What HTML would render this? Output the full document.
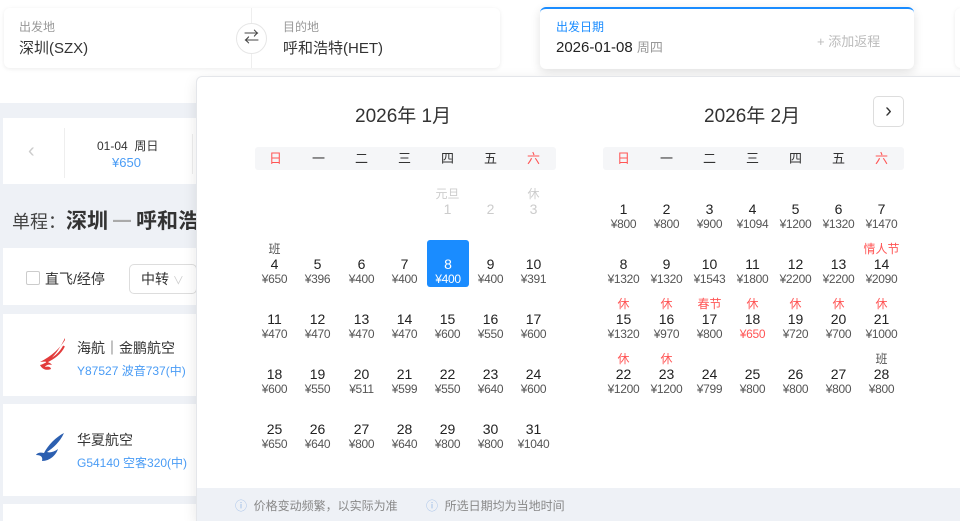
<!DOCTYPE html>
<html><head><meta charset="utf-8"><style>
*{margin:0;padding:0;box-sizing:border-box}
html,body{width:960px;height:521px;overflow:hidden}
body{background:#fff;font-family:"Liberation Sans","Noto Sans CJK SC",sans-serif;position:relative;color:#333}
.a{position:absolute}
.card{position:absolute;background:#fff;border-radius:6px;box-shadow:0 1px 4px rgba(0,0,0,.08)}
.lbl{font-size:12px;color:#999}
.c{position:absolute;width:43px;text-align:center}
.c .l{height:14px;font-size:12px;line-height:14px;color:#f55}
.c .l.g{color:#555}
.c .n{height:16px;font-size:14px;line-height:16px;color:#222}
.c .p{height:14px;font-size:12px;line-height:14px;color:#555;letter-spacing:-.3px}
.c.dis .n,.c.dis .l{color:#ccc}
.c.sel{background:#1a8cff;border-radius:3px}
.c.sel .n,.c.sel .p{color:#fff}
.wk{position:absolute;height:23px;background:#f5f6f8;border-radius:3px;font-size:13px;line-height:23px}
.wk span{position:absolute;width:43px;text-align:center;top:0}
</style></head><body>
<!-- top bar -->
<div class="card" style="left:4px;top:8px;width:496px;height:60px"></div>
<div class="a" style="left:251px;top:8px;width:1px;height:60px;background:#eee"></div>
<div class="a lbl" style="left:19px;top:18px">出发地</div>
<div class="a" style="left:19px;top:37px;font-size:15px">深圳(SZX)</div>
<div class="a" style="left:236px;top:23px;width:31px;height:31px;border-radius:50%;background:#fff;border:1px solid #e6e6e6;text-align:center;line-height:28px;font-size:15px;color:#444">⇄</div>
<div class="a lbl" style="left:283px;top:18px">目的地</div>
<div class="a" style="left:283px;top:37px;font-size:15px">呼和浩特(HET)</div>
<div class="card" style="left:540px;top:7px;width:374px;height:62px;border-top:2px solid #1a8cff;box-shadow:0 3px 10px rgba(0,0,0,.12)"></div>
<div class="a" style="left:556px;top:18px;font-size:12px;color:#1a8cff">出发日期</div>
<div class="a" style="left:556px;top:37px;font-size:15px;color:#222">2026-01-08 <span style="font-size:13px;color:#999">周四</span></div>
<div class="a" style="left:817px;top:31px;font-size:13px;color:#bbb">+ 添加返程</div>
<div class="card" style="left:955px;top:8px;width:20px;height:60px"></div>
<!-- left background -->
<div class="a" style="left:0;top:103px;width:960px;height:418px;background:#eef1f6"></div>
<div class="a" style="left:3px;top:118px;width:200px;height:66px;background:#fff"></div>
<div class="a" style="left:28px;top:140px;font-size:20px;color:#ccc">‹</div>
<div class="a" style="left:64px;top:128px;width:1px;height:50px;background:#eee"></div>
<div class="a" style="left:97px;top:137px;font-size:12px">01-04&nbsp; 周日</div>
<div class="a" style="left:112px;top:155px;font-size:13px;color:#4a9cf5">¥650</div>
<div class="a" style="left:192px;top:134px;width:1px;height:40px;background:#eee"></div>
<div class="a" style="left:12px;top:205px;font-size:18px;color:#444">单程：<b style="font-size:21px;color:#333">深圳</b><span style="color:#aaa"> ━ </span><b style="font-size:21px;color:#333">呼和浩</b></div>
<div class="a" style="left:3px;top:248px;width:200px;height:57px;background:#fff"></div>
<div class="a" style="left:26px;top:271px;width:14px;height:14px;border:1px solid #ccc;border-radius:2px;background:#fff"></div>
<div class="a" style="left:45px;top:269px;font-size:14px">直飞/经停</div>
<div class="a" style="left:129px;top:264px;width:68px;height:30px;border:1px solid #ddd;border-radius:5px;font-size:14px;line-height:28px;padding-left:11px">中转 <span style="color:#ccc;font-size:11px">∨</span></div>
<div class="a" style="left:3px;top:314px;width:200px;height:82px;background:#fff"></div>
<div class="a" style="left:3px;top:404px;width:200px;height:92px;background:#fff"></div>
<div class="a" style="left:3px;top:504px;width:200px;height:17px;background:#fff"></div>
<svg class="a" style="left:34px;top:338px" width="34" height="36" viewBox="0 0 34 36"><path d="M31 2C26 10 18 18 6 24c6-1 10 0 12 3-3-1-6 0-7 2 3-1 6 0 6 2-5 2-9 0-11-4 8-2 16-9 25-27z" fill="#e23b3b"/><path d="M30 8C26 16 20 20 12 24" stroke="#e23b3b" stroke-width="2" fill="none"/></svg>
<div class="a" style="left:77px;top:338px;font-size:14px">海航｜金鹏航空</div>
<div class="a" style="left:77px;top:362px;font-size:12px;color:#4a9cf5">Y87527 波音737(中)</div>
<svg class="a" style="left:34px;top:431px" width="32" height="36" viewBox="0 0 32 36"><path d="M30 2C22 6 14 14 10 22c-4-1-7 0-8 2 5 0 7 2 6 6 8 0 14-6 16-12-4 3-8 4-11 3 6-4 13-10 17-19z" fill="#2c5fb0"/></svg>
<div class="a" style="left:77px;top:430px;font-size:14px">华夏航空</div>
<div class="a" style="left:77px;top:454px;font-size:12px;color:#4a9cf5">G54140 空客320(中)</div>
<!-- popup -->
<div class="a" style="left:196px;top:76px;width:780px;height:445px;background:#fff;border:1px solid #e4e6ea;border-bottom:none;border-radius:6px 6px 0 0;box-shadow:0 4px 14px rgba(0,0,0,.1);overflow:hidden">
<div class="a" style="left:0;top:411px;width:780px;height:40px;background:#eef1f6"></div>
<div class="a" style="left:38px;top:420px;font-size:12px;color:#888"><span style="color:#9bbbe6">ⓘ</span>&nbsp; 价格变动频繁，以实际为准</div>
<div class="a" style="left:229px;top:420px;font-size:12px;color:#888"><span style="color:#9bbbe6">ⓘ</span>&nbsp; 所选日期均为当地时间</div>
</div>
<div class="a" style="left:355px;top:101px;font-size:19px;color:#333">2026年 1月</div>
<div class="a" style="left:704px;top:101px;font-size:19px;color:#333">2026年 2月</div>
<div class="a" style="left:873px;top:96px;width:31px;height:31px;border:1px solid #ddd;border-radius:5px;text-align:center;line-height:28px;font-size:20px;color:#333">›</div>
<div class="wk" style="left:255px;top:147px;width:301px"><span style="left:-1px;color:#f55">日</span><span style="left:42px">一</span><span style="left:85px">二</span><span style="left:128px">三</span><span style="left:171px">四</span><span style="left:214px">五</span><span style="left:257px;color:#f55">六</span></div>
<div class="wk" style="left:603px;top:147px;width:301px"><span style="left:-1px;color:#f55">日</span><span style="left:42px">一</span><span style="left:85px">二</span><span style="left:128px">三</span><span style="left:171px">四</span><span style="left:214px">五</span><span style="left:257px;color:#f55">六</span></div>
<!-- Jan -->
<div class="c dis" style="left:426px;top:187px"><div class="l" style="color:#ccc">元旦</div><div class="n">1</div></div>
<div class="c dis" style="left:469px;top:187px"><div class="l"></div><div class="n">2</div></div>
<div class="c dis" style="left:512px;top:187px"><div class="l" style="color:#ccc">休</div><div class="n">3</div></div>
<div class="c" style="left:253px;top:242px"><div class="l g">班</div><div class="n">4</div><div class="p">¥650</div></div>
<div class="c" style="left:296px;top:242px"><div class="l"></div><div class="n">5</div><div class="p">¥396</div></div>
<div class="c" style="left:340px;top:242px"><div class="l"></div><div class="n">6</div><div class="p">¥400</div></div>
<div class="c" style="left:383px;top:242px"><div class="l"></div><div class="n">7</div><div class="p">¥400</div></div>
<div class="c sel" style="left:427px;top:240px;height:47px;width:42px;padding-top:2px"><div class="l"></div><div class="n">8</div><div class="p">¥400</div></div>
<div class="c" style="left:469px;top:242px"><div class="l"></div><div class="n">9</div><div class="p">¥400</div></div>
<div class="c" style="left:512px;top:242px"><div class="l"></div><div class="n">10</div><div class="p">¥391</div></div>
<div class="c" style="left:253px;top:297px"><div class="l"></div><div class="n">11</div><div class="p">¥470</div></div>
<div class="c" style="left:296px;top:297px"><div class="l"></div><div class="n">12</div><div class="p">¥470</div></div>
<div class="c" style="left:340px;top:297px"><div class="l"></div><div class="n">13</div><div class="p">¥470</div></div>
<div class="c" style="left:383px;top:297px"><div class="l"></div><div class="n">14</div><div class="p">¥470</div></div>
<div class="c" style="left:426px;top:297px"><div class="l"></div><div class="n">15</div><div class="p">¥600</div></div>
<div class="c" style="left:469px;top:297px"><div class="l"></div><div class="n">16</div><div class="p">¥550</div></div>
<div class="c" style="left:512px;top:297px"><div class="l"></div><div class="n">17</div><div class="p">¥600</div></div>
<div class="c" style="left:253px;top:352px"><div class="l"></div><div class="n">18</div><div class="p">¥600</div></div>
<div class="c" style="left:296px;top:352px"><div class="l"></div><div class="n">19</div><div class="p">¥550</div></div>
<div class="c" style="left:340px;top:352px"><div class="l"></div><div class="n">20</div><div class="p">¥511</div></div>
<div class="c" style="left:383px;top:352px"><div class="l"></div><div class="n">21</div><div class="p">¥599</div></div>
<div class="c" style="left:426px;top:352px"><div class="l"></div><div class="n">22</div><div class="p">¥550</div></div>
<div class="c" style="left:469px;top:352px"><div class="l"></div><div class="n">23</div><div class="p">¥640</div></div>
<div class="c" style="left:512px;top:352px"><div class="l"></div><div class="n">24</div><div class="p">¥600</div></div>
<div class="c" style="left:253px;top:407px"><div class="l"></div><div class="n">25</div><div class="p">¥650</div></div>
<div class="c" style="left:296px;top:407px"><div class="l"></div><div class="n">26</div><div class="p">¥640</div></div>
<div class="c" style="left:340px;top:407px"><div class="l"></div><div class="n">27</div><div class="p">¥800</div></div>
<div class="c" style="left:383px;top:407px"><div class="l"></div><div class="n">28</div><div class="p">¥640</div></div>
<div class="c" style="left:426px;top:407px"><div class="l"></div><div class="n">29</div><div class="p">¥800</div></div>
<div class="c" style="left:469px;top:407px"><div class="l"></div><div class="n">30</div><div class="p">¥800</div></div>
<div class="c" style="left:512px;top:407px"><div class="l"></div><div class="n">31</div><div class="p">¥1040</div></div>
<!-- Feb -->
<div class="c" style="left:602px;top:187px"><div class="l"></div><div class="n">1</div><div class="p">¥800</div></div>
<div class="c" style="left:645px;top:187px"><div class="l"></div><div class="n">2</div><div class="p">¥800</div></div>
<div class="c" style="left:688px;top:187px"><div class="l"></div><div class="n">3</div><div class="p">¥900</div></div>
<div class="c" style="left:731px;top:187px"><div class="l"></div><div class="n">4</div><div class="p">¥1094</div></div>
<div class="c" style="left:774px;top:187px"><div class="l"></div><div class="n">5</div><div class="p">¥1200</div></div>
<div class="c" style="left:817px;top:187px"><div class="l"></div><div class="n">6</div><div class="p">¥1320</div></div>
<div class="c" style="left:860px;top:187px"><div class="l"></div><div class="n">7</div><div class="p">¥1470</div></div>
<div class="c" style="left:602px;top:242px"><div class="l"></div><div class="n">8</div><div class="p">¥1320</div></div>
<div class="c" style="left:645px;top:242px"><div class="l"></div><div class="n">9</div><div class="p">¥1320</div></div>
<div class="c" style="left:688px;top:242px"><div class="l"></div><div class="n">10</div><div class="p">¥1543</div></div>
<div class="c" style="left:731px;top:242px"><div class="l"></div><div class="n">11</div><div class="p">¥1800</div></div>
<div class="c" style="left:774px;top:242px"><div class="l"></div><div class="n">12</div><div class="p">¥2200</div></div>
<div class="c" style="left:817px;top:242px"><div class="l"></div><div class="n">13</div><div class="p">¥2200</div></div>
<div class="c" style="left:856px;top:242px;width:51px"><div class="l">情人节</div><div class="n">14</div><div class="p">¥2090</div></div>
<div class="c" style="left:602px;top:297px"><div class="l">休</div><div class="n">15</div><div class="p">¥1320</div></div>
<div class="c" style="left:645px;top:297px"><div class="l">休</div><div class="n">16</div><div class="p">¥970</div></div>
<div class="c" style="left:688px;top:297px"><div class="l">春节</div><div class="n">17</div><div class="p">¥800</div></div>
<div class="c" style="left:731px;top:297px"><div class="l">休</div><div class="n">18</div><div class="p" style="color:#f55">¥650</div></div>
<div class="c" style="left:774px;top:297px"><div class="l">休</div><div class="n">19</div><div class="p">¥720</div></div>
<div class="c" style="left:817px;top:297px"><div class="l">休</div><div class="n">20</div><div class="p">¥700</div></div>
<div class="c" style="left:860px;top:297px"><div class="l">休</div><div class="n">21</div><div class="p">¥1000</div></div>
<div class="c" style="left:602px;top:352px"><div class="l">休</div><div class="n">22</div><div class="p">¥1200</div></div>
<div class="c" style="left:645px;top:352px"><div class="l">休</div><div class="n">23</div><div class="p">¥1200</div></div>
<div class="c" style="left:688px;top:352px"><div class="l"></div><div class="n">24</div><div class="p">¥799</div></div>
<div class="c" style="left:731px;top:352px"><div class="l"></div><div class="n">25</div><div class="p">¥800</div></div>
<div class="c" style="left:774px;top:352px"><div class="l"></div><div class="n">26</div><div class="p">¥800</div></div>
<div class="c" style="left:817px;top:352px"><div class="l"></div><div class="n">27</div><div class="p">¥800</div></div>
<div class="c" style="left:860px;top:352px"><div class="l g">班</div><div class="n">28</div><div class="p">¥800</div></div>
</body></html>
